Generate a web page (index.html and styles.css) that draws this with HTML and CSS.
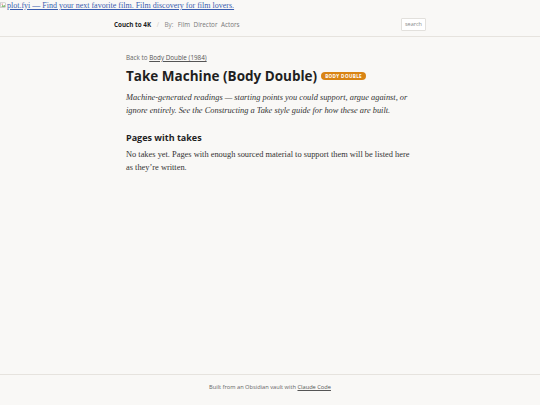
FILE: index.html
```html
<!DOCTYPE html>
<html lang="en">
<head>
<meta charset="utf-8">
<title>Take Machine (Body Double)</title>
<link rel="stylesheet" href="styles.css">
</head>
<body>
<div class="banner">
  <a class="banner-link" href="#"><svg class="broken" viewBox="0 0 16 16" width="7" height="7"><rect x="1" y="2" width="12" height="11" fill="#fff" stroke="#9a9a9a"/><path d="M3 11 L6 7 L8 9 L10 6 L12 11 Z" fill="#6aa84f"/><circle cx="5" cy="5" r="1.3" fill="#e06666"/></svg>plot.fyi — Find your next favorite film. Film discovery for film lovers.</a>
</div>
<header class="site-header">
  <div class="header-inner">
    <nav class="nav">
      <a class="brand" href="#">Couch to 4K</a>
      <span class="sep">/</span>
      <span class="by">By:</span>
      <a class="nav-link" href="#">Film</a>
      <a class="nav-link" href="#">Director</a>
      <a class="nav-link" href="#">Actors</a>
    </nav>
    <div class="search">search</div>
  </div>
</header>
<main class="main">
  <p class="back">Back to <a href="#">Body Double (1984)</a></p>
  <h1 class="title">Take Machine (Body Double) <span class="badge">Body Double</span></h1>
  <p class="lede">Machine-generated readings — starting points you could support, argue against, or ignore entirely. See the Constructing a Take style guide for how these are built.</p>
  <h2 class="section">Pages with takes</h2>
  <p class="body">No takes yet. Pages with enough sourced material to support them will be listed here as they’re written.</p>
</main>
<footer class="site-footer">
  <p>Built from an Obsidian vault with <a href="#">Claude Code</a></p>
</footer>
</body>
</html>
```
FILE: styles.css
```css
* { box-sizing: border-box; }
html, body { margin: 0; padding: 0; }
body {
  background: #f9f8f6;
  font-family: "Open Sans", "Noto Sans", sans-serif;
  color: #1f1f1f;
  min-height: 405px;
  display: flex;
  flex-direction: column;
}
.banner {
  height: 13px;
  font-family: "Liberation Serif", serif;
  font-size: 8px;
  line-height: 11px;
}
.banner-link {
  color: #3a5db0;
  text-decoration: underline;
}
.broken { vertical-align: -1px; }
.site-header {
  border-bottom: 1px solid #e6e3de;
}
.header-inner {
  width: 312px;
  margin: 0 auto;
  height: 23px;
  display: flex;
  align-items: center;
  justify-content: space-between;
}
.nav {
  display: flex;
  align-items: center;
  gap: 3.5px;
  font-size: 6.3px;
}
.brand {
  font-weight: 700;
  color: #1f1f1f;
  text-decoration: none;
  margin-right: 2px;
}
.sep { color: #cfcac3; margin-right: 2px; }
.by { color: #888; margin-right: 1px; }
.nav-link { color: #777; text-decoration: none; }
.search {
  font-size: 5.5px;
  color: #888;
  background: #fff;
  border: 1px solid #e2e0dc;
  border-radius: 1px;
  padding: 2px 3px;
  line-height: 7px;
}
.main {
  width: 288px;
  margin: 0 auto;
  padding-top: 17px;
  flex: 1;
}
.back {
  margin: 0;
  font-size: 6.3px;
  color: #666;
  line-height: 8px;
}
.back a { color: #555; }
.title {
  margin: 4px 0 0;
  font-size: 13.5px;
  line-height: 20px;
  font-weight: 700;
  color: #1f1f1f;
  display: flex;
  align-items: center;
  gap: 4px;
}
.badge {
  font-size: 4.6px;
  text-transform: uppercase;
  letter-spacing: 0.35px;
  background: #d98414;
  color: #fff;
  border-radius: 4px;
  padding: 1.5px 4px;
  line-height: 5px;
  font-weight: 700;
}
.lede {
  margin: 5px 0 0;
  font-family: "Liberation Serif", serif;
  font-style: italic;
  font-size: 8.4px;
  line-height: 13px;
  color: #333;
}
.section {
  margin: 14px 0 0;
  font-size: 9px;
  line-height: 13px;
  font-weight: 700;
  color: #1f1f1f;
}
.body {
  margin: 5px 0 0;
  font-family: "Liberation Serif", serif;
  font-size: 8.4px;
  line-height: 12.5px;
  color: #333;
}
.site-footer {
  border-top: 1px solid #e6e3de;
  height: 31px;
  text-align: center;
}
.site-footer p {
  margin: 8px 0 0;
  font-size: 5.7px;
  line-height: 8px;
  color: #666;
}
.site-footer a { color: #555; }
```
